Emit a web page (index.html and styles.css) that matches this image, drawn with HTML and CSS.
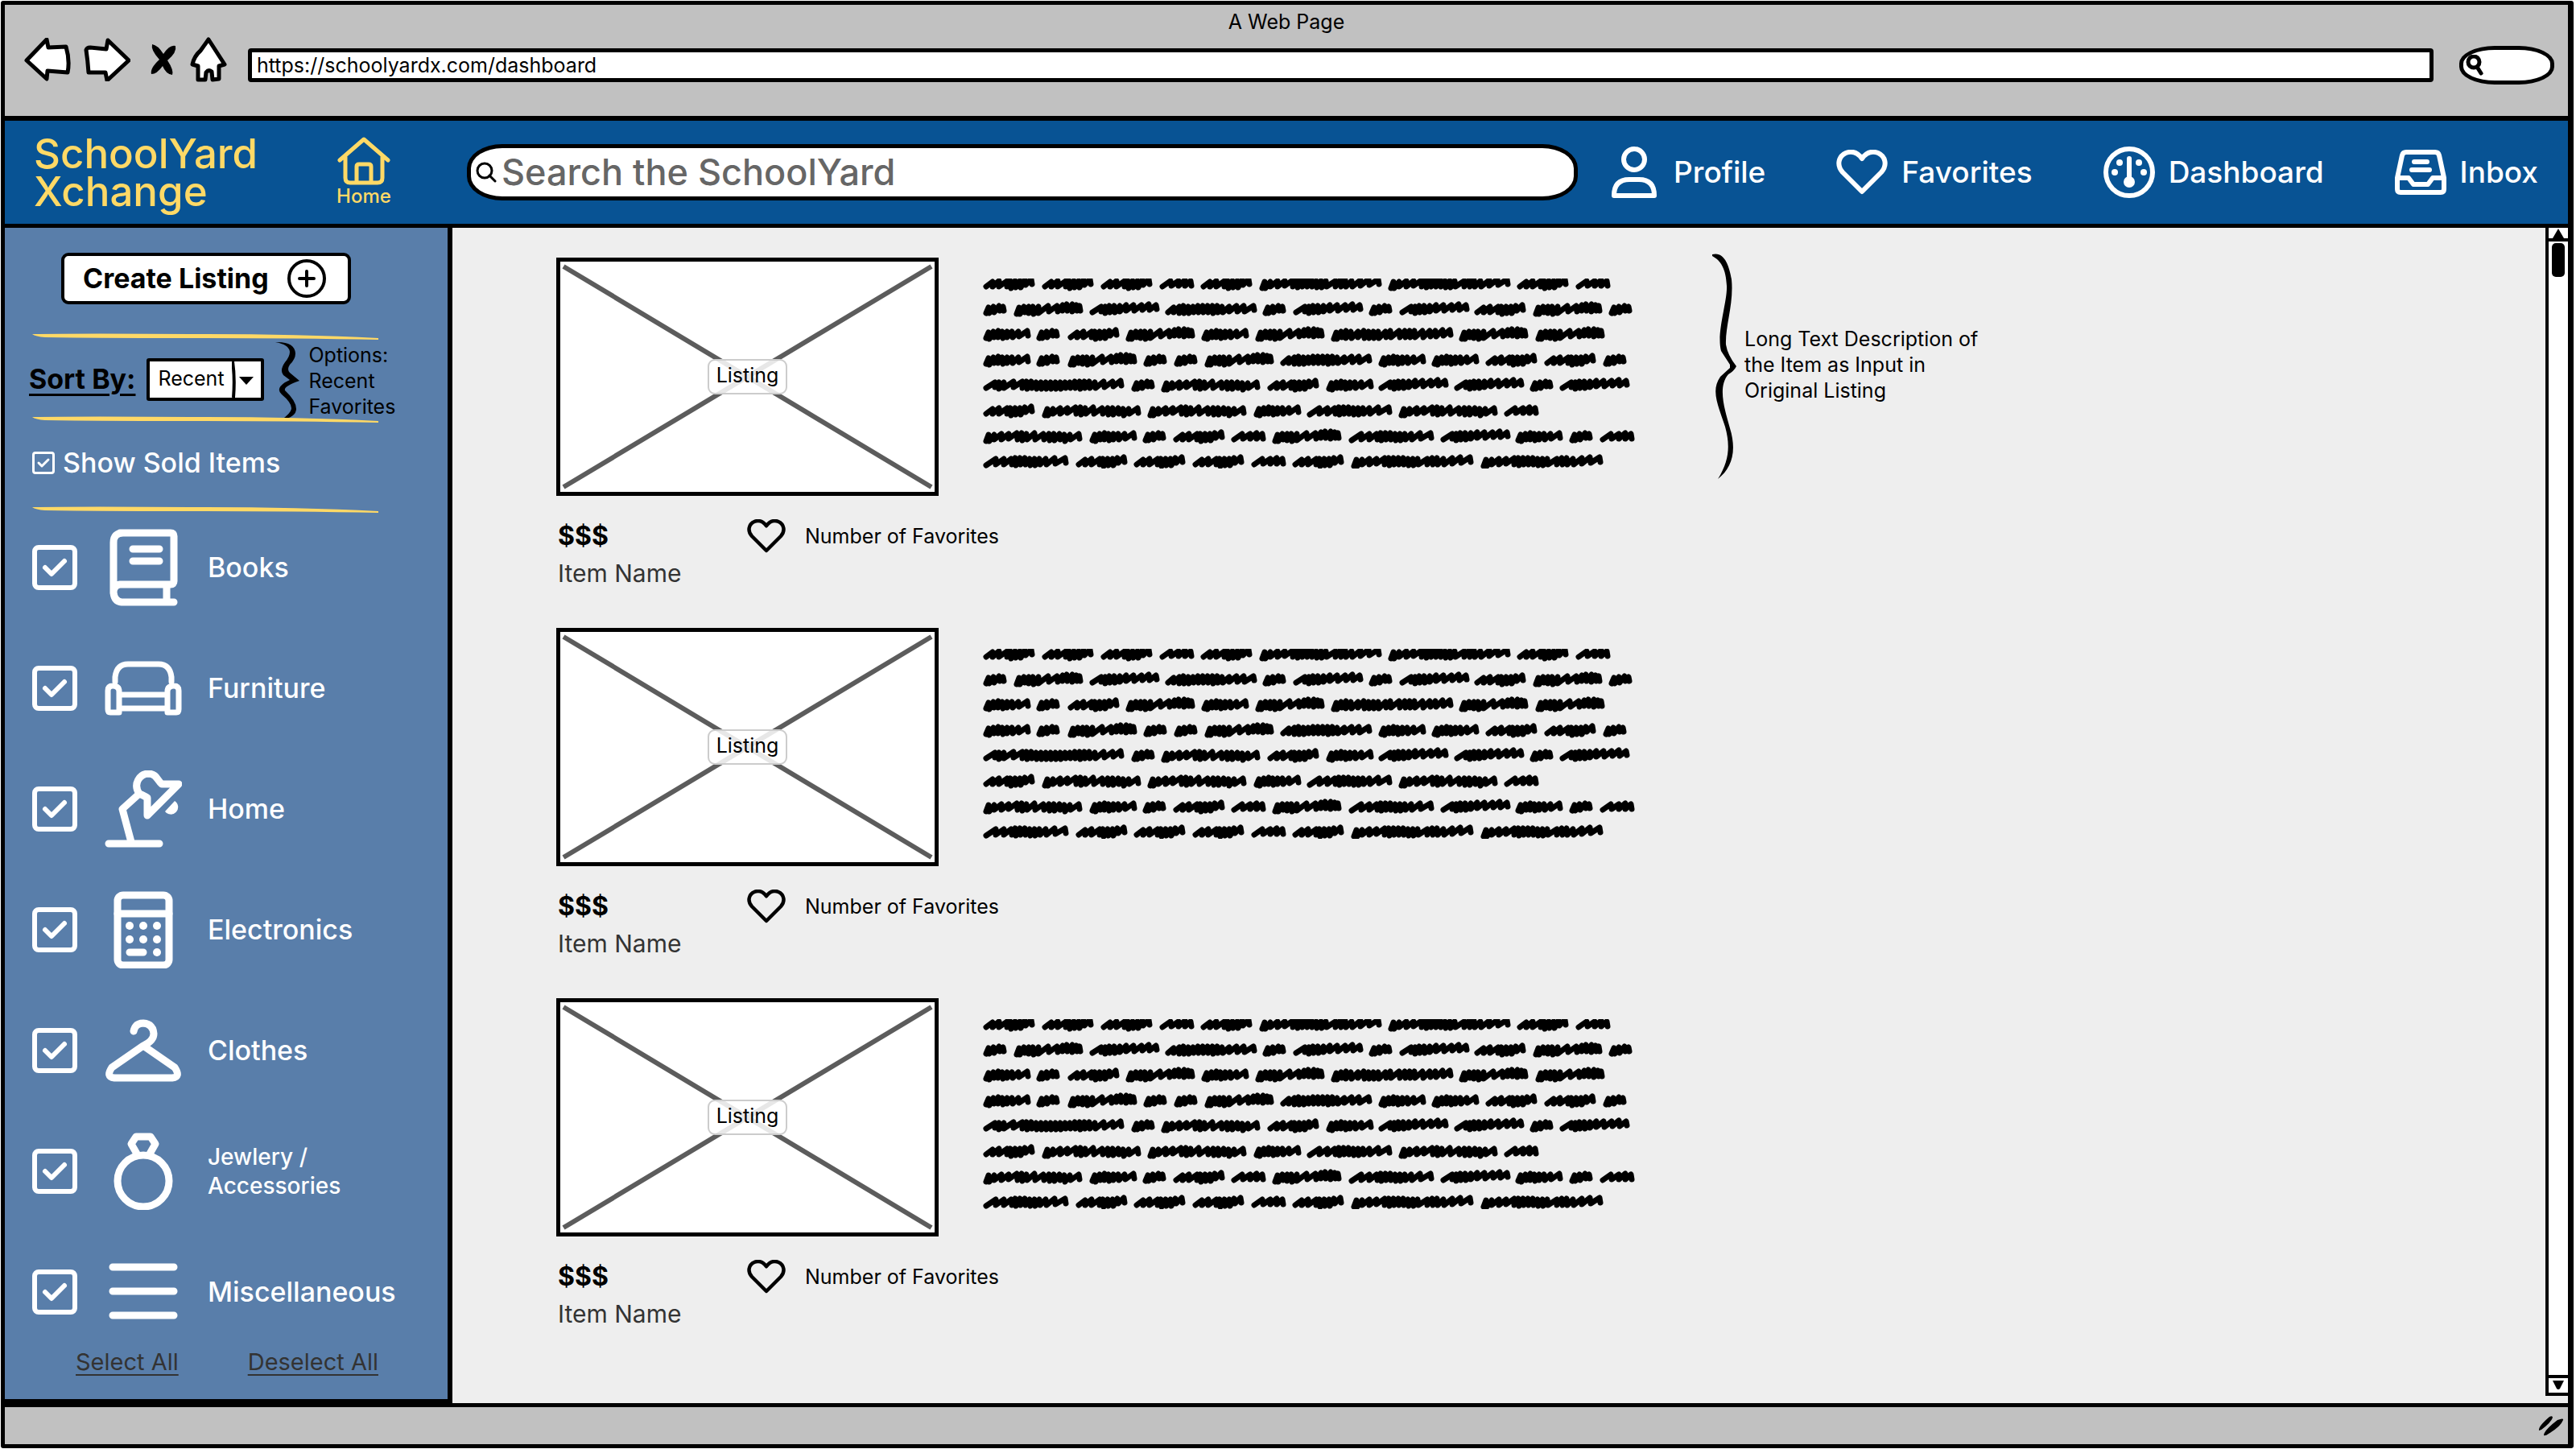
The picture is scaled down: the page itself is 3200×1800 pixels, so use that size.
FILE: index.html
```html
<!DOCTYPE html>
<html lang="en">
<head>
<meta charset="utf-8">
<title>SchoolYard Xchange</title>
<link rel="stylesheet" href="styles.css">
</head>
<body>
<svg class="defs" aria-hidden="true">
  <defs>
    <path id="wa" d="M3 4l3-7 1 7 5-8 1 7 6-8 1 6 4-5 1 5"/>
    <path id="wb" d="M3 3l10-7 1 6 9-6 0 6 8-7 0 7 7-6 1 6"/>
    <path id="wc" d="M3 4l3-7 1 8 5-9 1 7 5-8 0 8 5-7 1 8 5-8 0 7 6-7 1 7 7-7 1 6 10-7 1 6"/>
    <path id="wd" d="M3 3l8-6 0 6 8-7 0 7 10-7 0 7 4-7 1 9 5-9 1 8 5-8 1 8 5-9 1 6 7-7 1 6"/>
    <path id="we" d="M3 5l3-8 1 8 5-9 1 7 5-7 0 8 5-8 1 9 6-9 0 8 12-9 1 7 10-7 1 7 6-8 0 7 5-8 1 8 6-8 0 9 5-8 1 7 3-6 1 6"/>
    <path id="wf" d="M3 3l11-7 0 6 5-6 0 8 5-9 1 8 5-8 1 8 6-8 0 7 8-8 0 7 9-7 1 7 9-7 1 6 8-7 1 7 8-6 1 5"/>
    <path id="wg" d="M3 4l12-8 0 7 10-7 0 7 9-7 1 7 4-8 1 9 5-9 1 8 5-8 1 8 5-7 1 8 5-8 1 8 5-8 1 7 7-7 1 7 10-8 1 7 12-7 1 6"/>
    <path id="wh" d="M3 3l7-6 0 6 7-7 0 8 5-9 1 9 5-8 1 8 5-8 1 7 5-8 1 8 5-8 1 8 5-8 1 8 5-8 1 9 5-9 1 8 5-7 1 7 8-7 0 6 9-7 1 7 8-7 1 7 11-7 1 5"/>
    <path id="wi" d="M3 5l3-8 1 8 6-8 0 6 9-7 0 7 9-7 0 6 10-7 1 8 5-8 1 9 5-8 1 7 9-8 1 8 10-7 1 7 6-7 1 8 5-8 1 8 6-8 1 7 5-6 1 8 6-8 1 6 10-7 1 6"/>
    <path id="wj" d="M3 5l3-8 1 8 6-8 0 6 9-7 0 7 9-7 0 6 10-7 0 8 5-8 1 9 5-9 1 8 5-8 1 8 5-8 1 8 5-7 1 8 5-8 1 8 5-8 1 7 11-7 0 7 6-8 1 8 5-8 1 8 7-7 1 7 10-8 0 7 10-8 1 7 11-7 1 6"/>
    <path id="wk" d="M3 3l11-7 0 6 5-6 0 8 6-8 0 7 12-8 0 7 11-7 0 8 5-8 1 9 5-9 1 8 5-7 1 8 5-8 1 8 5-8 1 8 5-8 1 8 5-8 1 8 5-8 1 8 5-8 1 7 5-7 1 7 5-8 1 8 5-8 1 9 5-9 1 8 5-8 1 8 6-7 1 7 10-8 1 7 10-7 1 6 9-7 1 6"/>
    <path id="wl" d="M3 5l3-8 1 8 5-9 1 7 5-8 0 9 6-8 1 8 8-8 0 7 7-8 1 9 5-8 1 8 5-8 1 8 5-8 1 8 8-8 1 7 5-8 1 8 10-8 1 8 6-8 1 8 5-8 1 8 5-8 1 8 9-8 1 8 8-8 1 7 6-7 1 7 8-8 1 7 8-7 1 6"/>
    <symbol id="scribble" viewBox="0 0 820 236">
      <g fill="none" stroke="#000" stroke-width="7" stroke-linecap="round" stroke-linejoin="round">
        <g transform="translate(2 7)"><use href="#wd"/><use href="#wd" x="73"/><use href="#wd" x="146"/><use href="#wb" x="219"/><use href="#wd" x="270"/><use href="#wj" x="343"/><use href="#wj" x="503"/><use href="#wd" x="663"/><use href="#wb" x="736"/></g>
        <g transform="translate(2 39)"><use href="#wa"/><use href="#we" x="38"/><use href="#wf" x="132"/><use href="#wh" x="226"/><use href="#wa" x="347"/><use href="#wf" x="385"/><use href="#wa" x="479"/><use href="#wf" x="517"/><use href="#wd" x="610"/><use href="#we" x="683"/><use href="#wa" x="777"/></g>
        <g transform="translate(2 70)"><use href="#wc"/><use href="#wa" x="66"/><use href="#wd" x="105"/><use href="#we" x="177"/><use href="#wc" x="271"/><use href="#we" x="338"/><use href="#wl" x="432"/><use href="#we" x="591"/><use href="#we" x="686"/></g>
        <g transform="translate(2 102)"><use href="#wc"/><use href="#wa" x="66"/><use href="#we" x="105"/><use href="#wa" x="199"/><use href="#wa" x="237"/><use href="#we" x="275"/><use href="#wh" x="369"/><use href="#wc" x="491"/><use href="#wc" x="557"/><use href="#wd" x="624"/><use href="#wd" x="697"/><use href="#wa" x="770"/></g>
        <g transform="translate(2 133)"><use href="#wk"/><use href="#wa" x="184"/><use href="#wi" x="221"/><use href="#wd" x="353"/><use href="#wc" x="426"/><use href="#wf" x="491"/><use href="#wf" x="585"/><use href="#wa" x="679"/><use href="#wf" x="716"/></g>
        <g transform="translate(2 165)"><use href="#wd"/><use href="#wi" x="73"/><use href="#wi" x="204"/><use href="#wc" x="336"/><use href="#wg" x="402"/><use href="#wi" x="516"/><use href="#wb" x="647"/></g>
        <g transform="translate(2 197)"><use href="#wi"/><use href="#wc" x="132"/><use href="#wa" x="198"/><use href="#wd" x="236"/><use href="#wb" x="308"/><use href="#we" x="359"/><use href="#wg" x="454"/><use href="#wf" x="568"/><use href="#wc" x="661"/><use href="#wa" x="728"/><use href="#wb" x="766"/></g>
        <g transform="translate(2 228)"><use href="#wg"/><use href="#wd" x="115"/><use href="#wd" x="187"/><use href="#wd" x="260"/><use href="#wb" x="333"/><use href="#wd" x="384"/><use href="#wj" x="457"/><use href="#wj" x="618"/></g>
      </g>
    </symbol>
    <symbol id="heart" viewBox="0 0 64 56">
      <path fill="none" stroke="currentColor" stroke-width="6" stroke-linejoin="round" d="M32 52L8 28C0 19 3 8 12 4C20 1 27 4 32 11C37 4 44 1 52 4C61 8 64 19 56 28Z"/>
    </symbol>
    <symbol id="rule" viewBox="0 0 430 8" preserveAspectRatio="none">
      <path fill="#ffd966" d="M0 1Q60 0 215 1Q330 1 430 6V8Q330 6 215 6Q80 6 16 5Q4 4 0 1Z"/>
    </symbol>
  </defs>
</svg>

<div class="window">
  <header class="chrome">
    <div class="title">A Web Page</div>
    <div class="toolbar">
      <button class="tool" aria-label="Back"><svg width="58" height="54" viewBox="0 0 58 54"><path d="M28 2L3 28L28 51L29 41L54 43Q57 28 52 11L30 12Z"/></svg></button>
      <button class="tool forward" aria-label="Forward"><svg width="58" height="54" viewBox="0 0 58 54"><path d="M30 3L56 28L29 53L27 43L6 43Q5 28 3 15Q4 12 8 12L28 14Z"/></svg></button>
      <button class="tool stop" aria-label="Stop"><svg width="34" height="40" viewBox="0 0 34 40"><path class="ink" d="M3 1Q10 2 17 13Q25 1 32 3Q34 11 22 21Q30 33 28 39Q20 38 16 28Q9 38 2 38Q0 31 12 20Q1 8 3 1Z"/></svg></button>
      <button class="tool house" aria-label="Home page"><svg width="46" height="56" viewBox="0 0 46 56"><path d="M23 3L43 34L36 36L36 52L28 53L27 43Q23 40 20 44L19 53L10 53L10 36L3 34Q5 24 13 17Z"/></svg></button>
      <input class="address" type="text" aria-label="Address" value="https://schoolyardx.com/dashboard">
      <button class="quick" aria-label="Web search"><svg width="22" height="26" viewBox="0 0 22 26"><ellipse cx="10" cy="9" rx="7" ry="7"/><path d="M14 15L19 23"/></svg></button>
    </div>
  </header>

  <div class="topbar">
    <div class="logo">SchoolYard<br>Xchange</div>
    <a class="home" href="#"><svg width="66" height="60" viewBox="0 0 66 60" fill="none" stroke="currentColor" stroke-width="5" stroke-linecap="round" stroke-linejoin="round"><path d="M3 29L33 3L63 29M10 25V51Q10 57 16 57H50Q56 57 56 51V25M24 57V37Q24 34 27 34H39Q42 34 42 37V57"/></svg><span>Home</span></a>
    <label class="search"><svg width="26" height="26" viewBox="0 0 26 26" fill="none" stroke="#000" stroke-width="3" stroke-linecap="round"><circle cx="11" cy="11" r="9"/><path d="M17 17L24 24"/></svg><input type="search" aria-label="Search the SchoolYard" placeholder="Search the SchoolYard"></label>
    <nav class="nav">
      <a href="#"><svg width="64" height="64" viewBox="0 0 64 64" fill="none" stroke="currentColor" stroke-width="6"><circle cx="32" cy="16" r="13"/><path stroke-linejoin="round" d="M7 61Q7 41 26 41H38Q57 41 57 61Z"/></svg>Profile</a>
      <a href="#"><svg width="64" height="56"><use href="#heart"/></svg>Favorites</a>
      <a href="#"><svg width="64" height="64" viewBox="0 0 64 64"><circle cx="32" cy="32" r="29" fill="none" stroke="currentColor" stroke-width="6"/><g fill="currentColor"><circle cx="20" cy="20" r="4"/><circle cx="44" cy="20" r="4"/><circle cx="14" cy="32" r="4"/><circle cx="50" cy="32" r="4"/><circle cx="32" cy="44" r="7"/><rect x="29" y="12" width="6" height="32" rx="3"/></g></svg>Dashboard</a>
      <a href="#"><svg width="64" height="56" viewBox="0 0 64 56" fill="none" stroke="currentColor" stroke-width="6" stroke-linecap="round" stroke-linejoin="round"><path d="M3 35L9 7Q10 3 14 3H50Q54 3 55 7L61 35V49Q61 53 57 53H7Q3 53 3 49ZM3 35H17L23 43H41L47 35H61M24 15H40M21 25H43"/></svg>Inbox</a>
    </nav>
  </div>

  <div class="page">
    <aside class="side">
      <button class="create">Create Listing<svg width="50" height="50" viewBox="0 0 50 50" fill="none" stroke="#000" stroke-width="4" stroke-linecap="round"><circle cx="25" cy="25" r="22"/><path d="M25 16V34M16 25H34"/></svg></button>
      <svg class="rule" height="8"><use href="#rule"/></svg>
      <div class="sort">
        <label for="sort">Sort By:</label>
        <select id="sort"><option>Recent</option><option>Favorites</option></select>
        <svg class="brace" width="30" height="98" viewBox="0 0 30 98"><path d="M0 1Q24 0 25 15Q25 22 18 29Q14 35 18 39L30 49Q10 56 12 61Q26 74 26 84Q26 94 7 98Q20 89 20 83Q20 76 8 66Q0 59 12 51L18 48L10 42Q5 36 12 26Q18 19 18 13Q17 4 0 1Z"/></svg>
        <p class="note">Options:<br>Recent<br>Favorites</p>
      </div>
      <svg class="rule" height="8"><use href="#rule"/></svg>
      <label class="sold"><input type="checkbox" checked>Show Sold Items</label>
      <svg class="rule" height="8"><use href="#rule"/></svg>
      <div class="cats">
        <label><input type="checkbox" checked><svg viewBox="0 0 96 96"><path d="M19 5H82Q86 5 86 9V65Q86 69 82 69H19Q11 70 11 79Q12 90 21 91H86M11 80V17Q11 5 23 5M77 70V90M35 25H68M35 40H68"/></svg>Books</label>
        <label><input type="checkbox" checked><svg viewBox="0 0 96 96"><path class="thin" d="M13 40V34Q15 18 29 18H67Q81 18 83 34V40M20 56H76M20 73H76M4 74V51Q4 45 10 45Q18 45 18 52V78H7Q4 78 4 74ZM92 74V51Q92 45 86 45Q78 45 78 52V78H89Q92 78 92 74Z"/></svg>Furniture</label>
        <label><input type="checkbox" checked><svg viewBox="0 0 96 96"><path d="M5 91H68M33 89L22 48L43 29M43 29C35 17 43 4 55 4C65 5 65 12 71 17H92L53 56V34Q50 32 43 29"/><path class="solid" d="M87 38A9 9 0 1 1 75 51Z"/></svg>Home</label>
        <label><input type="checkbox" checked><svg viewBox="0 0 96 96"><rect x="16" y="5" width="64" height="87" rx="7"/><path d="M16 28H80M31 76H48"/><g class="solid"><circle cx="31" cy="43" r="5"/><circle cx="48" cy="43" r="5"/><circle cx="65" cy="43" r="5"/><circle cx="31" cy="60" r="5"/><circle cx="48" cy="60" r="5"/><circle cx="65" cy="60" r="5"/><circle cx="65" cy="76" r="5"/></g></svg>Electronics</label>
        <label><input type="checkbox" checked><svg viewBox="0 0 96 96"><path d="M36 24Q38 14 48 14Q60 15 61 27Q61 36 48 42L9 69Q1 81 12 82H84Q95 81 87 69L48 42"/></svg>Clothes</label>
        <label><input type="checkbox" checked><svg viewBox="0 0 96 96"><circle cx="48" cy="60" r="32"/><path d="M41 28L33 14L39 5H57L63 14L55 28"/></svg><span class="small">Jewlery /<br>Accessories</span></label>
        <label><input type="checkbox" checked><svg viewBox="0 0 96 96"><path d="M10 17H86M10 47H86M10 77H86"/></svg>Miscellaneous</label>
      </div>
      <div class="bulk"><a href="#">Select All</a><a href="#">Deselect All</a></div>
    </aside>

    <main class="feed">
      <article class="listing">
        <div class="photo"><svg viewBox="0 0 465 286" preserveAspectRatio="none"><path d="M4 6L461 280M461 6L4 280"/></svg><span>Listing</span></div>
        <svg class="desc" width="820" height="236" role="img" aria-label="Item description"><use href="#scribble"/></svg>
        <div class="aside">
          <svg width="30" height="280" viewBox="0 0 30 280"><path d="M0 1C15-3 21 15 24 32C27 62 16 90 17 113Q19 126 30 140Q27 146 20 150C6 166 16 195 22 217C31 246 24 267 7 280C22 256 22 237 16 215C7 188-2 170 10 153L22 142V138L11 121C5 98 19 60 18 40C17 19 11 9 0 3Z"/></svg>
          <p>Long Text Description of<br>the Item as Input in<br>Original Listing</p>
        </div>
        <div class="meta"><strong>$$$</strong><span class="favs"><svg width="48" height="42"><use href="#heart"/></svg>Number of Favorites</span><span class="name">Item Name</span></div>
      </article>
      <article class="listing">
        <div class="photo"><svg viewBox="0 0 465 286" preserveAspectRatio="none"><path d="M4 6L461 280M461 6L4 280"/></svg><span>Listing</span></div>
        <svg class="desc" width="820" height="236" role="img" aria-label="Item description"><use href="#scribble"/></svg>
        <div class="meta"><strong>$$$</strong><span class="favs"><svg width="48" height="42"><use href="#heart"/></svg>Number of Favorites</span><span class="name">Item Name</span></div>
      </article>
      <article class="listing">
        <div class="photo"><svg viewBox="0 0 465 286" preserveAspectRatio="none"><path d="M4 6L461 280M461 6L4 280"/></svg><span>Listing</span></div>
        <svg class="desc" width="820" height="236" role="img" aria-label="Item description"><use href="#scribble"/></svg>
        <div class="meta"><strong>$$$</strong><span class="favs"><svg width="48" height="42"><use href="#heart"/></svg>Number of Favorites</span><span class="name">Item Name</span></div>
      </article>
    </main>

    <div class="scroll">
      <button aria-label="Scroll up"><svg width="14" height="12" viewBox="0 0 14 12"><path d="M7 0L14 12H0Z"/></svg></button>
      <div class="thumb"></div>
      <button class="down" aria-label="Scroll down"><svg width="14" height="12" viewBox="0 0 14 12"><path d="M0 0H14L9 10Q7 12 5 10Z"/></svg></button>
    </div>
  </div>

  <footer class="status"><svg width="32" height="26" viewBox="0 0 32 26"><path d="M1 19Q0 14 14 2Q18 0 18 3Q16 9 4 18ZM7 25Q7 19 24 6Q32 3 31 6Q28 14 13 23Q9 26 7 25Z"/></svg></footer>
</div>
</body>
</html>
```
FILE: styles.css
```css
* { box-sizing: border-box; }
body { margin: 0; background: #fff; color: #000; font: 500 25px/32px Inter, "Liberation Sans", sans-serif; }
p { margin: 0; }
a { color: inherit; text-decoration: none; }
button, input, select { font: inherit; color: inherit; margin: 0; }
svg { display: block; flex: none; }
.defs { position: absolute; width: 0; height: 0; }

.window { display: flex; flex-direction: column; min-height: calc(100vh - 2px); margin: 1px 3px 1px 1px; border: 5px solid #000; border-right-width: 7px; border-radius: 3px; }

.chrome { height: 144px; background: #c1c1c1; border-bottom: 6px solid #000; }
.title { text-align: center; padding-top: 5px; font-weight: 400; }
.toolbar { display: flex; align-items: center; height: 62px; padding: 0 17px 0 24px; }
.tool { border: 0; padding: 0; background: none; margin-right: 16px; }
.tool svg { fill: #fff; stroke: #000; stroke-width: 5; stroke-linejoin: round; }
.tool svg .ink { fill: #000; stroke: none; }
.forward { margin-right: 24px; }
.house { margin-right: 26px; }
.address { flex: 1; min-width: 0; height: 42px; margin-top: 14px; padding: 0 6px; border: 5px solid #000; border-radius: 4px; background: #fff; font-weight: 400; font-size: 25px; }
.quick { width: 118px; height: 48px; margin: 14px 0 0 32px; padding: 0 0 0 3px; border: 5px solid #000; border-radius: 44px / 22px; background: #fff; }
.quick svg { fill: none; stroke: #000; stroke-width: 5; stroke-linecap: round; }

.topbar { display: flex; align-items: center; height: 133px; padding: 0 37px 0 36px; background: #085394; border-bottom: 5px solid #000; color: #fff; }
.logo { width: 360px; color: #ffd966; font-size: 51px; line-height: 47px; }
.home { display: flex; flex-direction: column; align-items: center; width: 100px; margin-right: 78px; color: #ffd966; font-size: 24px; line-height: 28px; }
.search { display: flex; align-items: center; flex: 1; height: 70px; padding: 0 6px; border: 5px solid #000; border-radius: 44px / 30px; background: #fff; }
.search input { flex: 1; min-width: 0; border: 0; padding: 0 6px; background: none; outline: 0; color: #000; font-size: 45px; line-height: 56px; }
.search input::placeholder { color: #666; opacity: 1; }
.nav { display: flex; align-items: center; gap: 88px; margin-left: 38px; font-size: 37px; line-height: 44px; }
.nav a { display: flex; align-items: center; gap: 17px; }

.page { display: flex; flex: 1; background: #eee; }
.side { width: 556px; padding: 31px 32px 0 34px; background: #597eaa; border: 0 solid #000; border-width: 0 6px 5px 0; color: #fff; }
.create { display: flex; align-items: center; justify-content: space-between; width: 360px; height: 64px; margin: 0 0 36px 36px; padding: 0 26px 0 23px; border: 4px solid #000; border-radius: 9px; background: #fff; color: #000; font-size: 34px; font-weight: 700; }
.rule { width: 430px; }
.sort { display: flex; align-items: center; height: 95px; color: #000; }
.sort label { margin-left: -4px; padding-top: 2px; font-size: 34px; line-height: 40px; font-weight: 700; text-decoration: underline; text-decoration-thickness: 3px; text-underline-offset: 6px; }
.sort select { width: 146px; height: 53px; margin: 4px 0 0 14px; padding: 0 0 4px 10px; border: 4px solid #000; border-radius: 3px; appearance: none; font-weight: 400; font-size: 25px;
  background: #fff url("data:image/svg+xml,%3Csvg xmlns='http://www.w3.org/2000/svg' width='36' height='45'%3E%3Cpath d='M1 0Q4 20 2 45' fill='none' stroke='%23000' stroke-width='4'/%3E%3Cpath d='M9 19H27L18 29Z'/%3E%3C/svg%3E") right center no-repeat; }
.brace { margin: 6px 0 0 14px; }
.note { margin: 6px 0 0 11px; font-weight: 400; }
.sold { display: flex; align-items: center; gap: 10px; height: 104px; padding-bottom: 4px; font-size: 34px; }

input[type="checkbox"] { appearance: none; flex: none; width: 56px; height: 56px; border: 6px solid #fff; border-radius: 8px;
  background: url("data:image/svg+xml,%3Csvg xmlns='http://www.w3.org/2000/svg' viewBox='0 0 44 44'%3E%3Cpath d='M10 22L18 30L34 14' fill='none' stroke='%23fff' stroke-width='6' stroke-linecap='round' stroke-linejoin='round'/%3E%3C/svg%3E") center / 100% no-repeat; }
.sold input[type="checkbox"] { width: 28px; height: 28px; border-width: 3px; border-radius: 4px; }
.cats { display: flex; flex-direction: column; gap: 38px; margin-top: 12px; font-size: 34px; }
.cats label { display: flex; align-items: center; height: 112px; }
.cats svg { width: 96px; height: 96px; margin: 0 32px 0 34px; fill: none; stroke: #fff; stroke-width: 9; stroke-linecap: round; stroke-linejoin: round; }
.cats .thin { stroke-width: 7; }
.cats .solid { fill: #fff; stroke: none; }
.cats .small { font-size: 28px; line-height: 36px; }
.bulk { display: flex; gap: 86px; margin: 15px 0 20px 54px; color: #333; font-size: 29px; font-weight: 400; }
.bulk a { text-decoration: underline; text-decoration-thickness: 2px; text-underline-offset: 5px; }

.feed { flex: 1; min-width: 0; padding: 37px 0 0 129px; }
.listing { display: grid; grid-template-columns: 475px 820px auto; justify-content: start; column-gap: 54px; height: 460px; align-content: start; }
.photo { display: grid; place-items: center; height: 296px; border: 5px solid #000; background: #fff; font-weight: 400; }
.photo > * { grid-area: 1 / 1; }
.photo svg { width: 100%; height: 100%; fill: none; stroke: #5c5c5c; stroke-width: 6; }
.photo span { z-index: 1; padding: 2px 9px 6px; border: 2px solid #ccc; border-radius: 9px; background: rgba(255, 255, 255, .85); }
.desc { margin-top: 26px; }
.aside { display: flex; gap: 10px; margin: -5px 0 0 33px; font-weight: 400; }
.aside p { padding-top: 90px; }
.meta { display: grid; grid-column: 1 / -1; grid-template-columns: 235px auto; justify-content: start; padding: 28px 0 0 2px; row-gap: 4px; align-items: center; }
.meta strong { font-size: 32px; line-height: 44px; }
.favs { display: flex; align-items: center; gap: 24px; font-weight: 400; }
.name { color: #333; font-size: 30px; line-height: 40px; font-weight: 400; }

.scroll { display: flex; flex-direction: column; width: 28px; margin-bottom: 9px; border: 4px solid #000; border-width: 0 0 4px 4px; background: #fff; }
.scroll button { display: grid; place-items: center; height: 17px; padding: 0; border: 0; border-bottom: 4px solid #000; background: #fff; }
.scroll .down { height: 22px; margin-top: auto; border-bottom: 0; border-top: 4px solid #000; }
.thumb { width: 16px; height: 42px; margin: 2px 0 0 4px; border-radius: 5px; background: #000; }

.status { display: flex; justify-content: flex-end; align-items: center; height: 51px; padding-right: 5px; border-top: 5px solid #000; background: #c1c1c1; }
```
